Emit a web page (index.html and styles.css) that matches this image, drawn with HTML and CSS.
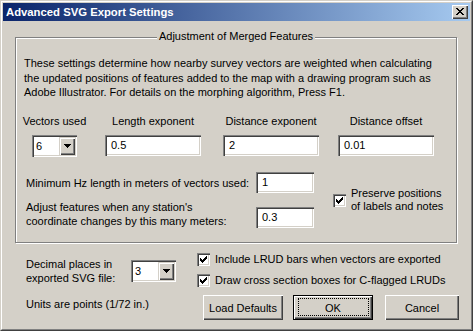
FILE: index.html
```html
<!DOCTYPE html>
<html>
<head>
<meta charset="utf-8">
<title>Advanced SVG Export Settings</title>
<link rel="stylesheet" href="styles.css">
</head>
<body>
<div class="window">
  <div class="frame">
    <div class="titlebar">
      <span class="title">Advanced SVG Export Settings</span>
      <span class="close">
        <svg class="close-x" width="8" height="7" viewBox="0 0 8 7" shape-rendering="crispEdges">
          <rect x="0" y="0" width="2" height="1"/><rect x="6" y="0" width="2" height="1"/>
          <rect x="1" y="1" width="2" height="1"/><rect x="5" y="1" width="2" height="1"/>
          <rect x="2" y="2" width="4" height="1"/>
          <rect x="3" y="3" width="2" height="1"/>
          <rect x="2" y="4" width="4" height="1"/>
          <rect x="1" y="5" width="2" height="1"/><rect x="5" y="5" width="2" height="1"/>
          <rect x="0" y="6" width="2" height="1"/><rect x="6" y="6" width="2" height="1"/>
        </svg>
      </span>
    </div>
    <div class="client">
      <div class="group">
        <span class="group-title">Adjustment of Merged Features</span>
        <p class="desc">These settings determine how nearby survey vectors are weighted when calculating<br>the updated positions of features added to the map with a drawing program such as<br>Adobe Illustrator. For details on the morphing algorithm, Press F1.</p>
        <div class="params">
          <div class="param p1">
            <span class="lbl">Vectors used</span>
            <div class="combo">
              <span class="combo-val">6</span>
              <span class="combo-btn"><svg width="7" height="4" viewBox="0 0 7 4" shape-rendering="crispEdges"><rect x="0" y="0" width="7" height="1"/><rect x="1" y="1" width="5" height="1"/><rect x="2" y="2" width="3" height="1"/><rect x="3" y="3" width="1" height="1"/></svg></span>
            </div>
          </div>
          <div class="param p2">
            <span class="lbl">Length exponent</span>
            <div class="edit w96">0.5</div>
          </div>
          <div class="param p3">
            <span class="lbl">Distance exponent</span>
            <div class="edit w96">2</div>
          </div>
          <div class="param p4">
            <span class="lbl">Distance offset</span>
            <div class="edit w96">0.01</div>
          </div>
        </div>
        <div class="lower">
          <div class="lower-left">
            <div class="lrow r1">
              <span class="llbl">Minimum Hz length in meters of vectors used:</span>
              <div class="edit w58">1</div>
            </div>
            <div class="lrow r2">
              <span class="llbl">Adjust features when any station's<br>coordinate changes by this many meters:</span>
              <div class="edit w58">0.3</div>
            </div>
          </div>
          <div class="check preserve">
            <span class="cbox"><svg width="7" height="7" viewBox="0 0 7 7" shape-rendering="crispEdges"><rect x="0" y="2" width="1" height="3"/><rect x="1" y="3" width="1" height="3"/><rect x="2" y="4" width="1" height="3"/><rect x="3" y="3" width="1" height="3"/><rect x="4" y="2" width="1" height="3"/><rect x="5" y="1" width="1" height="3"/><rect x="6" y="0" width="1" height="3"/></svg></span>
            <span class="ctext tight">Preserve positions<br>of labels and notes</span>
          </div>
        </div>
      </div>
      <div class="bottom">
        <div class="bleft">
          <div class="decimal">
            <span class="dlbl">Decimal places in<br>exported SVG file:</span>
            <div class="combo">
              <span class="combo-val">3</span>
              <span class="combo-btn"><svg width="7" height="4" viewBox="0 0 7 4" shape-rendering="crispEdges"><rect x="0" y="0" width="7" height="1"/><rect x="1" y="1" width="5" height="1"/><rect x="2" y="2" width="3" height="1"/><rect x="3" y="3" width="1" height="1"/></svg></span>
            </div>
          </div>
          <div class="units">Units are points (1/72 in.)</div>
        </div>
        <div class="bright">
          <div class="check crow">
            <span class="cbox"><svg width="7" height="7" viewBox="0 0 7 7" shape-rendering="crispEdges"><rect x="0" y="2" width="1" height="3"/><rect x="1" y="3" width="1" height="3"/><rect x="2" y="4" width="1" height="3"/><rect x="3" y="3" width="1" height="3"/><rect x="4" y="2" width="1" height="3"/><rect x="5" y="1" width="1" height="3"/><rect x="6" y="0" width="1" height="3"/></svg></span>
            <span class="ctext">Include LRUD bars when vectors are exported</span>
          </div>
          <div class="check crow crow2">
            <span class="cbox"><svg width="7" height="7" viewBox="0 0 7 7" shape-rendering="crispEdges"><rect x="0" y="2" width="1" height="3"/><rect x="1" y="3" width="1" height="3"/><rect x="2" y="4" width="1" height="3"/><rect x="3" y="3" width="1" height="3"/><rect x="4" y="2" width="1" height="3"/><rect x="5" y="1" width="1" height="3"/><rect x="6" y="0" width="1" height="3"/></svg></span>
            <span class="ctext">Draw cross section boxes for C-flagged LRUDs</span>
          </div>
          <div class="buttons">
            <button class="btn">Load Defaults</button>
            <button class="btn default">OK</button>
            <button class="btn cancel">Cancel</button>
          </div>
        </div>
      </div>
    </div>
  </div>
</div>
</body>
</html>
```

FILE: styles.css
```css
* { box-sizing: border-box; }
html, body { margin: 0; padding: 0; }
body {
  background: #d4d0c8;
  font-family: "Liberation Sans", Arial, sans-serif;
  font-size: 11px;
  color: #000;
}
.window {
  width: 473px;
  height: 331px;
  background: #d4d0c8;
  border: 1px solid;
  border-color: #d4d0c8 #404040 #404040 #d4d0c8;
}
.frame {
  height: 100%;
  border: 1px solid;
  border-color: #fff #808080 #808080 #fff;
  padding: 1px;
}
.titlebar {
  height: 18px;
  display: flex;
  align-items: center;
  justify-content: space-between;
  background: linear-gradient(to right, #0a246a, #a6caf0);
  padding: 0 2px 0 3px;
}
.title {
  color: #fff;
  font-weight: bold;
  font-size: 11.3px;
  line-height: 18px;
  white-space: nowrap;
}
.close {
  width: 16px;
  height: 14px;
  background: #d4d0c8;
  box-shadow: inset 1px 1px #fff, inset -1px -1px #404040, inset -2px -2px #808080;
}
.close-x { display: block; margin: 3px 0 0 4px; fill: #000; }

.client { padding: 0; }
.group {
  position: relative;
  margin: 16px 0 0 12px;
  width: 442px;
  height: 206px;
  border: 1px solid #808080;
  box-shadow: inset 1px 1px #fff, 1px 1px #fff;
  padding: 18px 0 0 8px;
}
.group-title {
  position: absolute;
  top: -9px;
  left: 0;
  right: 0;
  margin: 0 auto;
  width: fit-content;
  padding: 0 2px;
  line-height: 14px;
  background: #d4d0c8;
  white-space: nowrap;
}
.desc {
  margin: 0;
  line-height: 14.5px;
  white-space: nowrap;
}
.params {
  display: flex;
  margin-top: 14.5px;
}
.param {
  display: flex;
  flex-direction: column;
  align-items: center;
}
.lbl {
  line-height: 14px;
  white-space: nowrap;
  margin-bottom: 7px;
}
.p1 { margin-left: 8px; width: 45px; }
.p2 { margin-left: 28px; width: 96px; }
.p3 { margin-left: 22px; width: 96px; }
.p4 { margin-left: 19px; width: 96px; }

.combo {
  width: 45px;
  height: 22px;
  background: #fff;
  box-shadow: inset 1px 1px #808080, inset 2px 2px #404040, inset -1px -1px #fff, inset -2px -2px #d4d0c8;
  display: flex;
  padding: 2px;
}
.combo-val {
  flex: 1;
  padding-left: 2px;
  line-height: 18px;
}
.combo-btn {
  width: 16px;
  height: 18px;
  background: #d4d0c8;
  box-shadow: inset 1px 1px #d4d0c8, inset 2px 2px #fff, inset -1px -1px #404040, inset -2px -2px #808080;
  display: flex;
  align-items: center;
  justify-content: center;
}
.combo-btn svg { display: block; fill: #000; }

.edit {
  height: 21px;
  background: #fff;
  box-shadow: inset 1px 1px #808080, inset 2px 2px #404040, inset -1px -1px #fff, inset -2px -2px #d4d0c8;
  padding-left: 6px;
  line-height: 20px;
  white-space: nowrap;
}
.w96 { width: 96px; }
.w58 { width: 58px; flex: none; }

.lower {
  display: flex;
  align-items: center;
  margin: 15px 0 0 2px;
}
.lower-left { width: 288px; }
.lrow {
  display: flex;
  justify-content: space-between;
}
.r1 { align-items: center; }
.r2 { margin-top: 7px; align-items: flex-end; }
.llbl { line-height: 14px; white-space: nowrap; }

.check {
  display: flex;
  align-items: center;
}
.cbox {
  width: 13px;
  height: 13px;
  flex: none;
  background: #fff;
  box-shadow: inset 1px 1px #808080, inset 2px 2px #404040, inset -1px -1px #fff, inset -2px -2px #d4d0c8;
  padding: 3px;
}
.cbox svg { display: block; fill: #000; }
.ctext {
  margin-left: 5px;
  line-height: 14px;
  white-space: nowrap;
}
.ctext.tight { line-height: 13px; }
.preserve { margin-left: 19px; }

.bottom {
  display: flex;
  padding: 9px 0 0 23px;
}
.bleft {
  width: 171px;
  padding-top: 5px;
}
.decimal {
  display: flex;
  align-items: center;
}
.dlbl {
  width: 105px;
  line-height: 14px;
  white-space: nowrap;
}
.units {
  margin-top: 12px;
  line-height: 14px;
  white-space: nowrap;
}
.crow { height: 14px; }
.crow2 { margin-top: 7px; }
.buttons {
  display: flex;
  margin: 8px 0 0 6px;
}
.btn {
  position: relative;
  font-family: "Liberation Sans", Arial, sans-serif;
  font-size: 11px;
  color: #000;
  width: 80px;
  height: 25px;
  padding: 0;
  border: 0;
  background: #d4d0c8;
  box-shadow: inset 1px 1px #fff, inset -1px -1px #404040, inset -2px -2px #808080;
}
.btn.default {
  margin-left: 10px;
  border: 1px solid #000;
}
.btn.default::after {
  content: "";
  position: absolute;
  top: 2px;
  left: 4px;
  right: 3px;
  bottom: 3px;
  border: 1px dotted #000;
}
.btn.cancel {
  margin-left: 12px;
  width: 74px;
}
```
